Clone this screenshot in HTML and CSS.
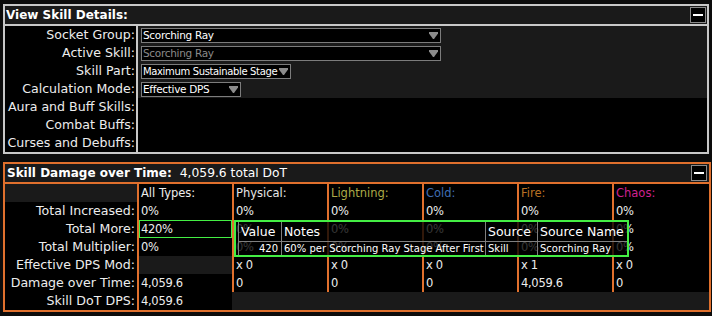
FILE: index.html
```html
<!DOCTYPE html>
<html>
<head>
<meta charset="utf-8">
<link rel="stylesheet" href="styles.css">
</head>
<body>
<section class="panel panel-view">
  <div class="panel-head">
    <span class="title">View Skill Details:</span>
    <div class="min"><span></span></div>
  </div>
  <div class="view-body">
    <div class="vlabel">Socket Group:</div>
    <div class="vctl"><div class="dd w300"><span>Scorching Ray</span><svg class="arrow" width="9" height="7" viewBox="0 0 9 7"><polygon points="0,0 9,0 9,1.5 5,7 4,7 0,1.5"/></svg></div></div>
    <div class="vlabel">Active Skill:</div>
    <div class="vctl"><div class="dd w300 disabled"><span>Scorching Ray</span><svg class="arrow" width="9" height="7" viewBox="0 0 9 7"><polygon points="0,0 9,0 9,1.5 5,7 4,7 0,1.5"/></svg></div></div>
    <div class="vlabel">Skill Part:</div>
    <div class="vctl"><div class="dd w150 tight"><span>Maximum Sustainable Stage</span><svg class="arrow" width="9" height="7" viewBox="0 0 9 7"><polygon points="0,0 9,0 9,1.5 5,7 4,7 0,1.5"/></svg></div></div>
    <div class="vlabel">Calculation Mode:</div>
    <div class="vctl"><div class="dd w100"><span>Effective DPS</span><svg class="arrow" width="9" height="7" viewBox="0 0 9 7"><polygon points="0,0 9,0 9,1.5 5,7 4,7 0,1.5"/></svg></div></div>
    <div class="vlabel">Aura and Buff Skills:</div>
    <div class="vctl empty"></div>
    <div class="vlabel">Combat Buffs:</div>
    <div class="vctl empty"></div>
    <div class="vlabel">Curses and Debuffs:</div>
    <div class="vctl empty"></div>
  </div>
</section>

<section class="panel panel-dmg">
  <div class="panel-head">
    <span class="title">Skill Damage over Time:<span class="sub">4,059.6 total DoT</span></span>
    <div class="min"><span></span></div>
  </div>
  <div class="dmg-body">
    <div class="lab head"></div>
    <div class="c h">All Types:</div>
    <div class="c h phys">Physical:</div>
    <div class="c h light">Lightning:</div>
    <div class="c h cold">Cold:</div>
    <div class="c h fire">Fire:</div>
    <div class="c h chaos">Chaos:</div>

    <div class="lab">Total Increased:</div>
    <div class="c v">0%</div><div class="c v">0%</div><div class="c v">0%</div><div class="c v">0%</div><div class="c v">0%</div><div class="c v">0%</div>

    <div class="lab">Total More:</div>
    <div class="c v hl">420%</div><div class="c v">0%</div><div class="c v">0%</div><div class="c v">0%</div><div class="c v">0%</div><div class="c v">0%</div>

    <div class="lab">Total Multiplier:</div>
    <div class="c v">0%</div><div class="c v">0%</div><div class="c v">0%</div><div class="c v">0%</div><div class="c v">0%</div><div class="c v">0%</div>

    <div class="lab">Effective DPS Mod:</div>
    <div class="c v blank"></div><div class="c v">x 0</div><div class="c v">x 0</div><div class="c v">x 0</div><div class="c v">x 1</div><div class="c v">x 0</div>

    <div class="lab">Damage over Time:</div>
    <div class="c v">4,059.6</div><div class="c v">0</div><div class="c v">0</div><div class="c v">0</div><div class="c v">4,059.6</div><div class="c v">0</div>

    <div class="lab">Skill DoT DPS:</div>
    <div class="c v">4,059.6</div>
    <div class="tail"></div>
  </div>

  <div class="tip">
    <div class="tc th first">Value</div>
    <div class="tc th">Notes</div>
    <div class="tc th">Source</div>
    <div class="tc th">Source Name</div>
    <div class="tc td first num">420</div>
    <div class="tc td">60% per Scorching Ray Stage After First</div>
    <div class="tc td">Skill</div>
    <div class="tc td">Scorching Ray</div>
  </div>
</section>
</body>
</html>
```

FILE: styles.css
```css
* {
  box-sizing: border-box;
  margin: 0;
  padding: 0;
}

html, body {
  background: #0c0c0c;
}

body {
  width: 712px;
  height: 316px;
  overflow: hidden;
  padding: 4px 0 0 3px;
  font-family: "DejaVu Sans", "Liberation Sans", sans-serif;
  color: #ededed;
}

.panel {
  position: relative;
  border: 2px solid #c8c8c8;
}

.panel-view {
  width: 706px;
}

.panel-dmg {
  width: 708px;
  margin-top: 8px;
  border-color: #e0702d;
}

.panel-head {
  height: 20px;
  background: #1a1a1a;
  border-bottom: 2px solid #c8c8c8;
  display: flex;
  align-items: center;
  justify-content: space-between;
}

.panel-dmg .panel-head {
  border-bottom-color: #e0702d;
}

.title {
  font-weight: bold;
  font-size: 12px;
  line-height: 18px;
  padding-left: 1px;
  color: #fff;
  white-space: nowrap;
}

.panel-dmg .title {
  padding-left: 2px;
}

.sub {
  font-weight: normal;
  font-size: 12.3px;
  margin-left: 8px;
}

.min {
  width: 16px;
  height: 16px;
  border: 1px solid #8a8a8a;
  background: #000;
  display: flex;
  align-items: center;
  justify-content: center;
  margin-right: 1px;
}

.panel-dmg .min {
  margin-right: 2px;
}

.min span {
  display: block;
  width: 10px;
  height: 2px;
  background: #fff;
}

/* View skill details */
.view-body {
  display: grid;
  grid-template-columns: 133px 1fr;
  grid-auto-rows: 18px;
}

.vlabel {
  background: #000;
  border-right: 2px solid #c8c8c8;
  text-align: right;
  padding-right: 1px;
  font-size: 12.6px;
  line-height: 18px;
  white-space: nowrap;
}

.vctl {
  background: #1a1a1a;
  padding: 2px 0 0 3px;
}

.vctl.empty {
  background: #000;
}

.dd {
  height: 15px;
  border: 1px solid #7c7c7c;
  background: #000;
  display: flex;
  align-items: center;
  justify-content: space-between;
  padding: 0 2px 0 1px;
  font-size: 10.5px;
  letter-spacing: -0.3px;
  line-height: 13px;
  white-space: nowrap;
  color: #fff;
}

.dd.tight {
  font-size: 10px;
  letter-spacing: -0.35px;
}

.dd.disabled {
  color: #8a8a8a;
}

.w300 { width: 300px; }
.w150 { width: 150px; }
.w100 { width: 100px; }

.arrow {
  flex: none;
  fill: #8c8c8c;
}

/* Damage table */
.dmg-body {
  display: grid;
  grid-template-columns: 132px 95px 95px 95px 95px 95px 1fr;
  grid-auto-rows: 18px;
}

.lab {
  background: #000;
  text-align: right;
  padding-right: 2px;
  font-size: 12.6px;
  line-height: 18px;
  white-space: nowrap;
}

.lab.head {
  background: #1a1a1a;
}

.c {
  background: #000;
  border-left: 2px solid #e0702d;
  padding-left: 2px;
  line-height: 18px;
  white-space: nowrap;
}

.c.h {
  font-size: 11.5px;
}

.c.v {
  font-size: 11.5px;
  letter-spacing: -0.3px;
}

.c.blank {
  background: #1a1a1a;
}

.hl {
  box-shadow: inset 0 0 0 1px #44ee44;
}

.phys { color: #e6e6e6; }
.light { color: #adaa47; }
.cold { color: #3f6db3; }
.fire { color: #b97123; }
.chaos { color: #d02090; }

.tail {
  grid-column: 3 / -1;
  background: #1a1a1a;
}

/* Breakdown tooltip */
.tip {
  position: absolute;
  left: 229px;
  top: 56px;
  width: 395px;
  height: 37px;
  border: 2px solid #44ee44;
  background: rgba(0, 0, 0, 0.78);
  padding-left: 2px;
  display: grid;
  grid-template-columns: 43px 204px 52px 1fr;
  grid-template-rows: 20px 13px;
}

.tc {
  border-left: 1px solid #7f7f7f;
  padding-left: 2px;
  white-space: nowrap;
  color: #fff;
}

.th {
  font-size: 12.5px;
  line-height: 19px;
  border-bottom: 1px solid #7f7f7f;
}

.td {
  font-size: 10px;
  line-height: 13px;
}

.num {
  text-align: right;
  padding-right: 3px;
}
```
